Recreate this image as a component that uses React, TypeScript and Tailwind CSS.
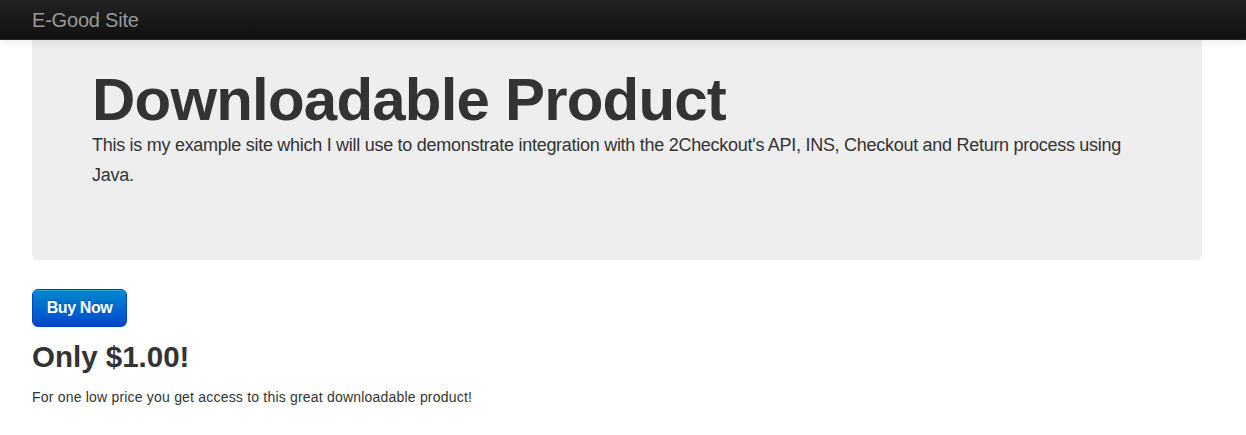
export default function App() {
  return (
    <div className="min-h-[435px] bg-white text-[#333] font-['Liberation_Sans','Helvetica_Neue',Arial,sans-serif]">
      <nav className="h-10 bg-gradient-to-b from-[#222222] to-[#111111] border-b border-[#252525] shadow-[0_1px_10px_rgba(0,0,0,0.1)] relative z-10">
        <div className="ml-[32px] w-[1170px]">
          <a href="#" className="block w-fit py-[10px] text-[20px] leading-[20px] font-light tracking-[-0.2px] text-[#999999]">
            E-Good Site
          </a>
        </div>
      </nav>

      <main className="ml-[32px] w-[1170px]">
        <div className="bg-[#eeeeee] rounded-b-md px-[60px] pt-[30px] pb-[60px]">
          <h1 className="text-[60px] leading-[60px] font-bold tracking-[-0.8px] text-[#333]">
            Downloadable Product
          </h1>
          <p className="text-[18px] leading-[30px] font-light tracking-[-0.28px] mb-[10px] text-[#333]">
            This is my example site which I will use to demonstrate integration with the 2Checkout's API, INS, Checkout and Return process using Java.
          </p>
        </div>

        <button
          type="button"
          className="mt-[29px] h-[38px] w-[95px] rounded-md border border-[#0044cc] bg-gradient-to-b from-[#0088cc] to-[#0044cc] text-white text-[16px] leading-[20px] font-bold tracking-[-0.4px] shadow-[inset_0_1px_0_rgba(255,255,255,0.2),0_1px_2px_rgba(0,0,0,0.05)] [text-shadow:0_-1px_0_rgba(0,0,0,0.25)]"
        >
          Buy Now
        </button>

        <h2 className="mt-[10px] mb-[10px] text-[29.5px] leading-[40px] font-bold text-[#333]">
          Only $1.00!
        </h2>
        <p className="text-[14px] leading-[20px] tracking-[0.2px] text-[#333]">
          For one low price you get access to this great downloadable product!
        </p>
      </main>
    </div>
  );
}
